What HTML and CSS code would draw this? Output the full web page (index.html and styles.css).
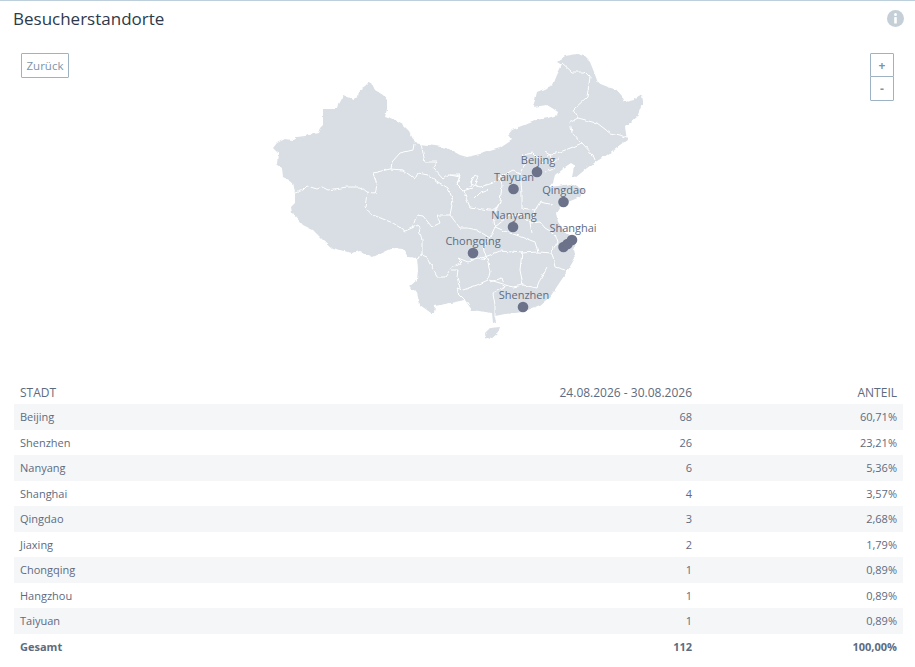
FILE: index.html
```html
<!DOCTYPE html>
<html>
<head>
    <meta charset="UTF-8">
    <title>Besucherstandorte</title>
    <link rel="stylesheet" href="styles.css">
</head>
<body>
    <div class="panel">
        <div class="panel-head">
            <h1>Besucherstandorte</h1>
            <svg class="info-icon" width="17" height="17" viewBox="0 0 17 17">
                <circle cx="8.5" cy="8.5" r="8.5" fill="#c4cfd8"/>
                <circle cx="8.5" cy="4.6" r="1.5" fill="#fff"/>
                <rect x="7.2" y="7" width="2.6" height="6.6" rx="0.6" fill="#fff"/>
            </svg>
        </div>

        <div class="map-area">
            <button class="back-button">Zurück</button>
            <div class="zoom-buttons">
                <button class="zoom-button">+</button>
                <button class="zoom-button">-</button>
            </div>
            <!-- viewBox is in page coordinates, the area starts 37px down -->
            <svg class="map" width="915" height="348" viewBox="0 37 915 348">
                <defs>
                    <!-- roughens the hand-traced outlines -->
                    <filter id="rough" x="0" y="0" width="100%" height="100%" filterUnits="objectBoundingBox">
                        <feTurbulence type="fractalNoise" baseFrequency="0.16" numOctaves="2" seed="4"/>
                        <feDisplacementMap in="SourceGraphic" scale="3.5" xChannelSelector="R" yChannelSelector="G"/>
                    </filter>
                </defs>
                <g filter="url(#rough)">
                    <path class="land" d="M273 148 L277 143 L285 139 L293 140 L297 137 L305 136 L318 133 L320 128 L323 125 L323 109 L337 109 L338 104 L343 95 L353 99 L358 97 L359 90 L365 86 L368 83 L372 84 L375 90 L383 95 L387 100 L387 109 L385 117 L394 120 L403 125 L409 131 L415 143 L420 144 L435 146 L447 148 L460 155 L467 157 L480 154 L500 148 L512 140 L508 135 L512 130 L525 125 L537 120 L548 118 L557 115 L558 112 L552 108 L547 105 L533 107 L535 100 L537 92 L553 85 L557 75 L562 65 L557 62 L565 56 L577 54 L584 56 L590 62 L594 72 L598 83 L608 87 L617 90 L622 96 L625 102 L634 100 L642 95 L643 102 L637 117 L625 127 L627 140 L617 147 L607 155 L597 161 L587 168 L575 178 L572 178 L574 165 L571 163 L562 169 L555 175 L553 182 L549 187 L558 186 L570 184 L585 190 L580 197 L568 202 L560 207 L556 213 L558 222 L565 232 L577 240 L573 250 L575 258 L568 270 L558 285 L550 297 L540 305 L523 312 L505 314 L495 316 L496 322 L493 323 L492 313 L472 310 L465 300 L450 303 L435 306 L434 313 L431 313 L420 305 L417 292 L409 287 L417 280 L418 270 L417 258 L408 257 L403 249 L392 248 L373 257 L360 251 L352 253 L332 248 L323 240 L313 230 L303 225 L292 213 L291 207 L295 203 L295 193 L293 182 L283 177 L282 168 L277 164 L278 153 Z"/>
                    <path class="land" d="M485 333 L490 328 L500 327 L498 333 L490 340 L486 338 Z"/>
                    <path class="borders" d="M295 193 L303 190 L307 186 L317 189 L322 187 L328 190 L347 187 L360 187 L366 192 L375 193 L377 185 L373 173 L390 169 L403 170 L415 179 L418 173 L428 175 L438 182 L448 188 L453 200 L450 215 L442 215 L437 215 L440 223 L432 227 L423 216 L417 215 L412 228 L405 231 L393 223 L373 215 L365 208 L367 192"/>
                    <path class="borders" d="M414 144 L413 150 L400 153 L392 162 L391 169"/>
                    <path class="borders" d="M421 144 L425 162 L437 162 L433 168 L443 179 L448 175 L460 175 L457 185 L463 191 L470 207 L477 208 L488 210"/>
                    <path class="borders" d="M463 191 L472 188 L478 177 L475 175 L470 183 L480 187 L493 183 L500 177 L513 170 L520 173"/>
                    <path class="borders" d="M450 175 L460 177 L457 183 M473 177 L470 187 M475 198 L480 193 L488 190"/>
                    <path class="borders" d="M412 228 L418 225 L422 240 L422 255 L417 258 M422 255 L427 257 L437 277 L445 277 L452 267 L462 262 L458 258 L468 262 L478 258 L487 260"/>
                    <path class="borders" d="M450 215 L460 228 L468 228 L477 230 L490 238 L483 247 L488 262 L490 272 L488 280 L477 285 L463 290 L457 288 L458 293 L465 300"/>
                    <path class="borders" d="M452 270 L458 270 L457 277 L460 288 M490 282 L502 278 L505 287 L493 293 L495 305 L495 317"/>
                    <path class="borders" d="M482 258 L490 255 L500 251 L522 253 L538 252 L552 253 L555 267 L565 270 M522 252 L520 270 L523 285 L513 287 L490 280 M547 267 L540 280 L537 288 L523 285"/>
                    <path class="borders" d="M490 238 L495 227 L507 232 L522 237 L535 242 L538 252 M530 223 L532 233 M552 253 L553 247 L558 243 L555 234 L545 228 L540 222 L530 223 L522 214 L510 215 L495 227"/>
                    <path class="borders" d="M488 210 L495 210 L500 202 L502 185 L500 177 M500 202 L493 216 L495 227 M522 193 L522 208 L535 210 L540 202 L553 205 M520 173 L522 193 M535 210 L530 223"/>
                    <path class="borders" d="M520 173 L527 160 L522 155 L533 153 L543 163 L548 155 L560 152 L573 147 L582 143 L593 155 L595 160 M545 152 L550 155 L553 163 L560 157 M545 173 L555 168 M582 143 L572 132 L570 122 L578 118 L597 123 L610 133 L620 135 L627 138 M562 63 L572 72 L585 72 L590 77 L587 97 L573 110 L578 118"/>
                </g>
                <circle class="dot" cx="537" cy="172" r="5.3"/>
                <circle class="dot" cx="513.5" cy="189" r="5.3"/>
                <circle class="dot" cx="563.5" cy="202" r="5.3"/>
                <circle class="dot" cx="513" cy="227" r="5.3"/>
                <circle class="dot" cx="473" cy="253" r="5.3"/>
                <circle class="dot" cx="523" cy="307" r="5.3"/>
                <circle class="dot" cx="563.5" cy="247" r="5.3"/>
                <circle class="dot" cx="567.5" cy="244" r="5.3"/>
                <circle class="dot" cx="572" cy="240" r="5.3"/>
                <text class="city" x="538" y="164">Beijing</text>
                <text class="city" x="514" y="181">Taiyuan</text>
                <text class="city" x="564" y="194">Qingdao</text>
                <text class="city" x="514" y="219">Nanyang</text>
                <text class="city" x="573" y="232">Shanghai</text>
                <text class="city" x="473" y="245">Chongqing</text>
                <text class="city" x="524" y="299">Shenzhen</text>
            </svg>
        </div>

        <table class="stats">
            <thead>
                <tr><th>STADT</th><th class="num">24.08.2026 - 30.08.2026</th><th class="num">ANTEIL</th></tr>
            </thead>
            <tbody>
                <tr><td>Beijing</td><td class="num">68</td><td class="num">60,71%</td></tr>
                <tr><td>Shenzhen</td><td class="num">26</td><td class="num">23,21%</td></tr>
                <tr><td>Nanyang</td><td class="num">6</td><td class="num">5,36%</td></tr>
                <tr><td>Shanghai</td><td class="num">4</td><td class="num">3,57%</td></tr>
                <tr><td>Qingdao</td><td class="num">3</td><td class="num">2,68%</td></tr>
                <tr><td>Jiaxing</td><td class="num">2</td><td class="num">1,79%</td></tr>
                <tr><td>Chongqing</td><td class="num">1</td><td class="num">0,89%</td></tr>
                <tr><td>Hangzhou</td><td class="num">1</td><td class="num">0,89%</td></tr>
                <tr><td>Taiyuan</td><td class="num">1</td><td class="num">0,89%</td></tr>
                <tr class="total"><td>Gesamt</td><td class="num">112</td><td class="num">100,00%</td></tr>
            </tbody>
        </table>
    </div>
</body>
</html>
```

FILE: styles.css
```css
body {
    margin: 0;
    background-color: #ffffff;
    font-family: "Open Sans", sans-serif;
    color: #5d6b80;
}

.panel {
    border-top: 1px solid #bccfdb;
    height: 666px;
    overflow: hidden;
}

.panel-head {
    display: flex;
    justify-content: space-between;
    align-items: center;
    height: 34px;
    padding: 0 11px 2px 13px;
}

h1 {
    margin: 0;
    font-size: 17px;
    font-weight: 400;
    color: #2c3a4b;
}

.map-area {
    position: relative;
    height: 348px;
}

.map {
    display: block;
}

.land {
    fill: #d8dee4;
}

.borders {
    fill: none;
    stroke: #ffffff;
    stroke-width: 1;
    stroke-linejoin: round;
}

.dot {
    fill: #6b7289;
}

.city {
    font-size: 11px;
    fill: #5d6b80;
    text-anchor: middle;
}

.back-button,
.zoom-button {
    font-family: "Open Sans", sans-serif;
    background-color: #ffffff;
    border: 1px solid #9db2c2;
    border-radius: 1px;
    color: #8094a8;
    padding: 0;
    font-size: 11.5px;
}

.back-button {
    position: absolute;
    left: 21px;
    top: 16px;
    width: 48px;
    height: 25px;
}

.zoom-buttons {
    position: absolute;
    left: 870px;
    top: 16px;
    display: flex;
    flex-direction: column;
}

.zoom-button {
    width: 24px;
    height: 24px;
    font-weight: 700;
    font-size: 12px;
}

.zoom-button + .zoom-button {
    margin-top: -1px;
    height: 25px;
}

.stats {
    width: 889px;
    margin-left: 14px;
    border-collapse: collapse;
    font-size: 11px;
    table-layout: fixed;
}

.stats th {
    font-weight: 400;
    font-size: 12px;
    line-height: 16px;
    text-align: left;
    vertical-align: top;
    padding: 0 6px;
    height: 19px;
}

.stats td {
    padding: 0 6px;
    height: 25.5px;
}

.stats .num {
    text-align: right;
}

.stats th:nth-child(1) {
    width: 300px;
}

.stats th:nth-child(2) {
    width: 360px;
}

.stats tbody tr:nth-child(odd) td {
    background-color: #f4f6f8;
}

.stats .total td {
    font-weight: 700;
}
```
